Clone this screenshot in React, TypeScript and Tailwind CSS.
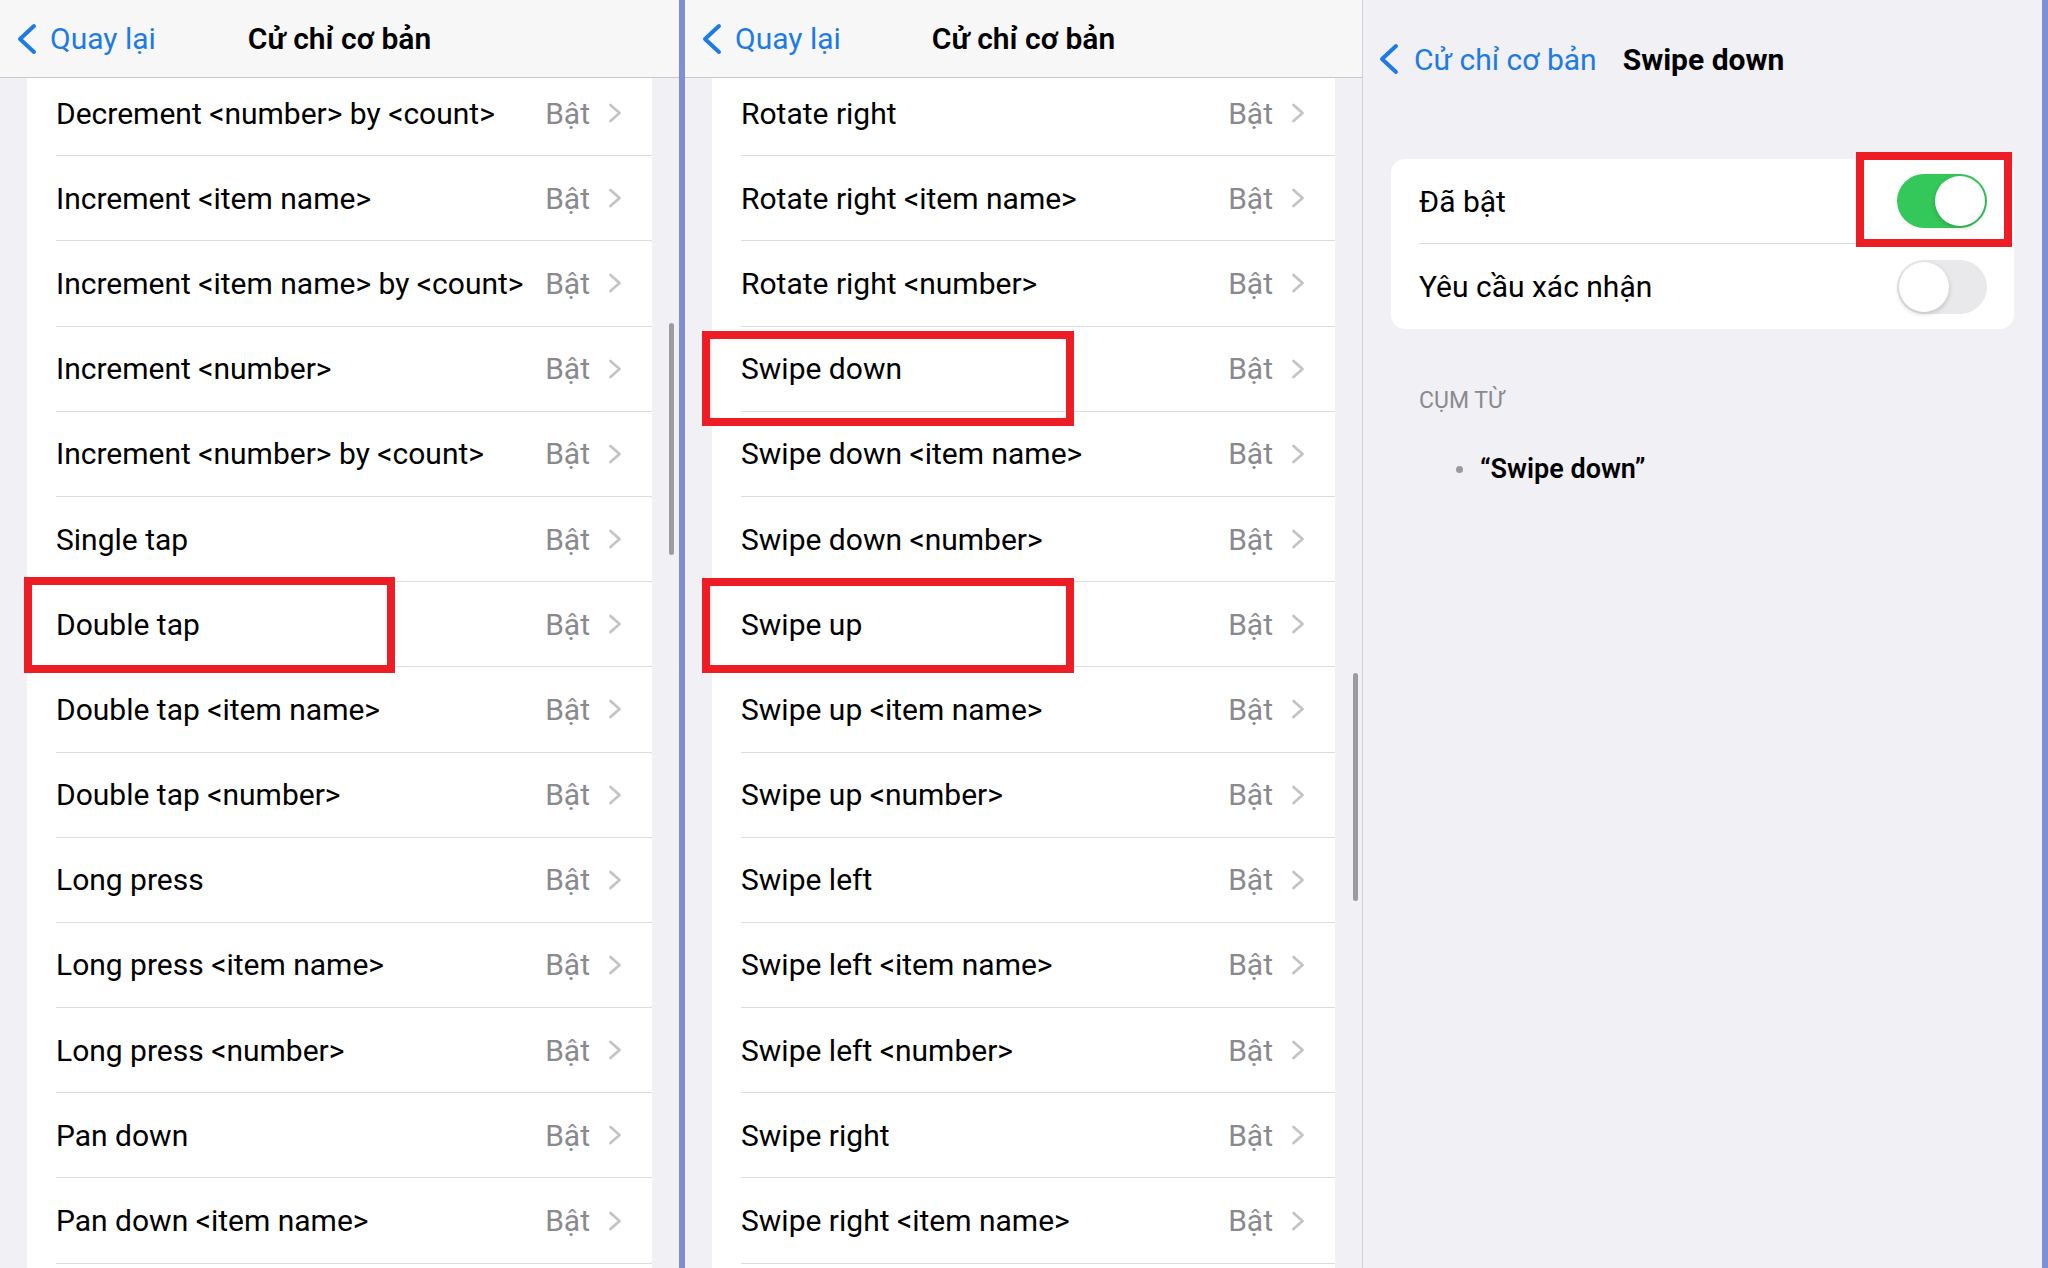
import type { ReactNode } from 'react'

interface GestureRow {
  label: string
  mark?: string
}

const leftRows: GestureRow[] = [
  { label: 'Decrement <number> by <count>' },
  { label: 'Increment <item name>' },
  { label: 'Increment <item name> by <count>' },
  { label: 'Increment <number>' },
  { label: 'Increment <number> by <count>' },
  { label: 'Single tap' },
  { label: 'Double tap', mark: '-left-[3px] -top-[5px] w-[371px] h-[96px]' },
  { label: 'Double tap <item name>' },
  { label: 'Double tap <number>' },
  { label: 'Long press' },
  { label: 'Long press <item name>' },
  { label: 'Long press <number>' },
  { label: 'Pan down' },
  { label: 'Pan down <item name>' },
]

const middleRows: GestureRow[] = [
  { label: 'Rotate right' },
  { label: 'Rotate right <item name>' },
  { label: 'Rotate right <number>' },
  { label: 'Swipe down', mark: '-left-[10px] top-[4px] w-[372px] h-[95px]' },
  { label: 'Swipe down <item name>' },
  { label: 'Swipe down <number>' },
  { label: 'Swipe up', mark: '-left-[10px] -top-[4px] w-[372px] h-[95px]' },
  { label: 'Swipe up <item name>' },
  { label: 'Swipe up <number>' },
  { label: 'Swipe left' },
  { label: 'Swipe left <item name>' },
  { label: 'Swipe left <number>' },
  { label: 'Swipe right' },
  { label: 'Swipe right <item name>' },
]

function Disclosure() {
  return (
    <svg width="14" height="20" viewBox="0 0 14 20" className="ml-[18px] shrink-0">
      <polyline points="2.5,2 11.5,10 2.5,18" fill="none" stroke="#c4c4c7" strokeWidth="2.8" strokeLinecap="round" strokeLinejoin="round" />
    </svg>
  )
}

function BackChevron({ className }: { className?: string }) {
  return (
    <svg width="21" height="32" viewBox="0 0 21 32" className={className}>
      <polyline points="18,3 4,16 18,29" fill="none" stroke="#1e7be6" strokeWidth="4" strokeLinecap="round" strokeLinejoin="round" />
    </svg>
  )
}

// red highlight frame drawn on top of a row
function Frame({ className }: { className: string }) {
  return <div className={`absolute border-[8px] border-[#ee1c24] pointer-events-none ${className}`} />
}

function Row({ row }: { row: GestureRow }) {
  return (
    <div className="relative h-[85.2px] pl-[29px]">
      <div className="h-full flex items-center pr-[30px] border-b border-[#dcdce0]">
        <span className="flex-1 text-[30px] text-black whitespace-nowrap">{row.label}</span>
        <span className="text-[30px] text-[#8a8a8e]">Bật</span>
        <Disclosure />
      </div>
      {row.mark && <Frame className={row.mark} />}
    </div>
  )
}

function ListPanel({ rows, width, scroll }: { rows: GestureRow[]; width: string; scroll: string }) {
  return (
    <section className={`relative h-full shrink-0 bg-[#f0f0f5] flex flex-col overflow-hidden ${width}`}>
      <header className="relative z-10 h-[78px] shrink-0 bg-[#f7f7f7] border-b border-[#c8c8cc] grid grid-cols-[1fr_auto_1fr] items-center">
        <div className="flex items-center pl-[16px]">
          <BackChevron />
          <span className="ml-[13px] text-[30px] text-[#1e7be6]">Quay lại</span>
        </div>
        <h1 className="text-[30px] font-semibold text-black">Cử chỉ cơ bản</h1>
        <div />
      </header>
      <div className="flex-1 -mt-[7px]">
        <div className="mx-[27px] bg-white">
          {rows.map((row) => (
            <Row key={row.label} row={row} />
          ))}
          <div className="h-[40px]" />
        </div>
      </div>
      <div className={`absolute w-[5px] rounded-full bg-[#9c9ca0] ${scroll}`} />
    </section>
  )
}

function Toggle({ on }: { on: boolean }) {
  return (
    <div className={`w-[90px] h-[54px] rounded-full p-[2px] flex ${on ? 'bg-[#34c759] justify-end' : 'bg-[#e9e9eb] justify-start'}`}>
      <div className="w-[50px] h-[50px] rounded-full bg-white shadow-[0_2px_5px_rgba(0,0,0,0.18)]" />
    </div>
  )
}

function SettingRow({ children, last }: { children: ReactNode; last?: boolean }) {
  return (
    <div className="h-[85px] pl-[28px]">
      <div className={`h-full flex items-center justify-between pr-[27px] ${last ? '' : 'border-b border-[#dcdce0]'}`}>
        {children}
      </div>
    </div>
  )
}

function DetailPanel() {
  return (
    <section className="relative flex-1 h-full bg-[#f0f0f5] border-l border-[#d3d3da]">
      <header className="h-[118px] flex items-center pl-[15px]">
        <BackChevron />
        <span className="ml-[15px] text-[30px] text-[#1e7be6]">Cử chỉ cơ bản</span>
        <h1 className="ml-[26px] text-[30px] font-bold text-black">Swipe down</h1>
      </header>
      <div className="relative mt-[41px] mx-[28px] bg-white rounded-[14px]">
        <SettingRow>
          <span className="text-[30px] text-black">Đã bật</span>
          <Toggle on />
        </SettingRow>
        <SettingRow last>
          <span className="text-[30px] text-black">Yêu cầu xác nhận</span>
          <Toggle on={false} />
        </SettingRow>
        <Frame className="left-[465px] -top-[7px] w-[156px] h-[95px]" />
      </div>
      <div className="mt-[58px] pl-[56px] text-[23px] leading-[28px] text-[#8a8a8e]">CỤM TỪ</div>
      <ul className="mt-[39px] pl-[93px]">
        <li className="flex items-center h-[30px]">
          <span className="w-[7px] h-[7px] rounded-full bg-[#9a9a9e]" />
          <span className="ml-[17px] text-[27px] font-semibold text-black">“Swipe down”</span>
        </li>
      </ul>
    </section>
  )
}

export default function App() {
  return (
    <div className="w-[2048px] h-[1268px] overflow-hidden flex bg-[#f0f0f5] font-['Roboto','Liberation_Sans',sans-serif]">
      <ListPanel rows={leftRows} width="w-[679px]" scroll="right-[5px] top-[323px] h-[232px]" />
      <div className="w-[6px] h-full shrink-0 bg-[#7d8fd5]" />
      <ListPanel rows={middleRows} width="w-[677px]" scroll="right-[4px] top-[673px] h-[228px]" />
      <DetailPanel />
      <div className="w-[6px] h-full shrink-0 bg-[#7d8fd5]" />
    </div>
  )
}
